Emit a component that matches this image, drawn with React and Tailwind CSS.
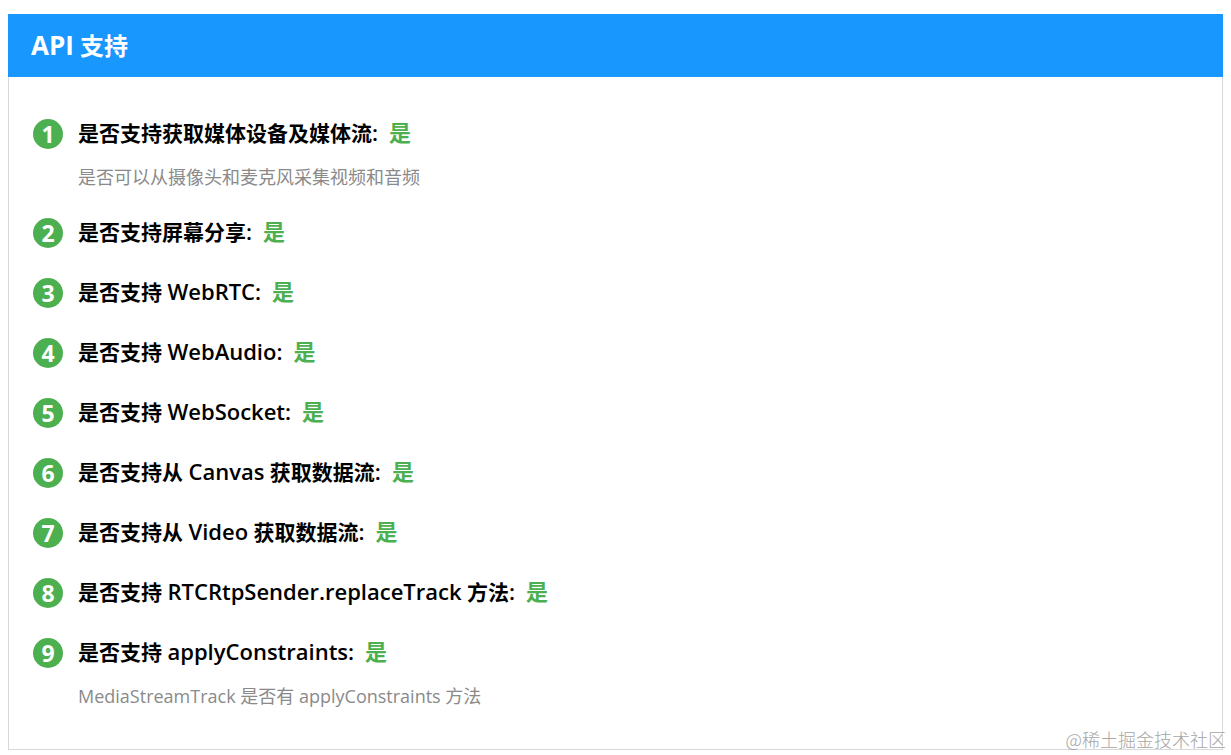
const FONT = "font-['Open_Sans','Noto_Sans_CJK_SC',sans-serif]";

const items = [
    { label: '是否支持获取媒体设备及媒体流:', desc: '是否可以从摄像头和麦克风采集视频和音频' },
    { label: '是否支持屏幕分享:' },
    { label: '是否支持 WebRTC:' },
    { label: '是否支持 WebAudio:' },
    { label: '是否支持 WebSocket:' },
    { label: '是否支持从 Canvas 获取数据流:' },
    { label: '是否支持从 Video 获取数据流:' },
    { label: '是否支持 RTCRtpSender.replaceTrack 方法:' },
    { label: '是否支持 applyConstraints:', desc: 'MediaStreamTrack 是否有 applyConstraints 方法' },
];

// latin runs are set a bit larger than the CJK ones, like in the original font pairing
const Label = ({ text }) => (
    <span className="text-[21px] font-semibold text-black whitespace-pre">
        {text.split(/([A-Za-z.:]+)/).map((part, i) =>
            i % 2 === 1 ? <span key={i} className="text-[22px]">{part}</span> : part
        )}
    </span>
);

const App = () => {
    return (
        <div className={`relative w-[1231px] h-[755px] overflow-hidden bg-white pt-[14px] pl-2 pr-2 ${FONT}`}>
            <div className="h-[736px] border border-[#d9d9d9] border-t-0">
                <div className="h-[63px] -ml-px -mr-px bg-[#1897ff] flex items-center pl-[23px]">
                    <h1 className="text-[24px] font-bold text-white">
                        <span className="text-[26px]">API</span> 支持
                    </h1>
                </div>
                <ul className="pt-[41px] pl-[24px]">
                    {items.map((item, i) => (
                        <li key={i} className="mb-[28px]">
                            <div className="flex items-center h-[32px]">
                                <span className="w-[30px] h-[30px] rounded-full bg-[#4caf50] text-white text-[23px] font-bold flex items-center justify-center mr-[15px]">
                                    {i + 1}
                                </span>
                                <div className="flex items-center -mt-[2px]">
                                    <Label text={item.label} />
                                    <span className="text-[22px] font-bold text-[#4caf50] ml-[11px] -mt-px">是</span>
                                </div>
                            </div>
                            {item.desc && (
                                <p className="text-[18px] text-[#8a8a8a] ml-[45px] mt-[15px] leading-[24px]">{item.desc}</p>
                            )}
                        </li>
                    ))}
                </ul>
            </div>
            <span className="absolute right-[5px] bottom-[2px] text-[18px] font-light text-[#a6a6a6] font-['Noto_Sans_CJK_SC',sans-serif]">@稀土掘金技术社区</span>
        </div>
    );
};

export default App;
